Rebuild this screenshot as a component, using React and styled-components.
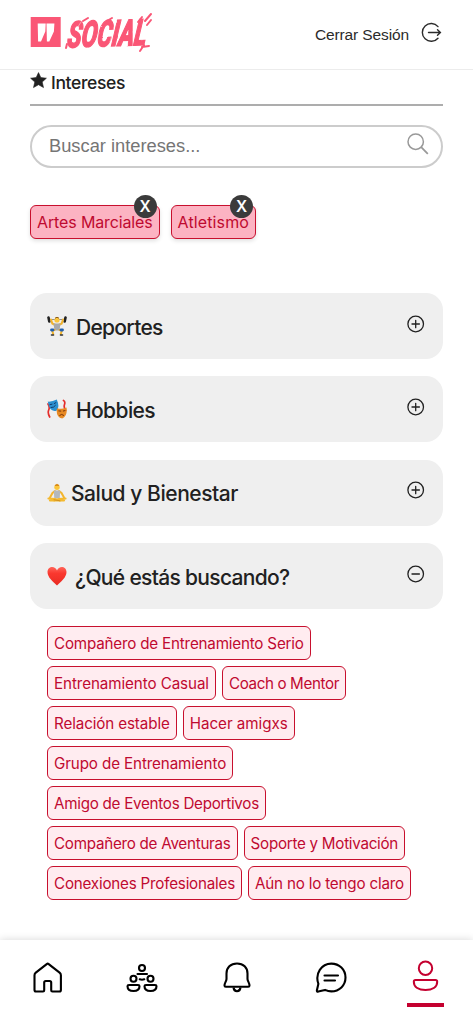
import React, { Component } from 'react';
import styled, { createGlobalStyle, css } from 'styled-components';

const GlobalStyle = createGlobalStyle`
    * {
        box-sizing: border-box;
    }

    body {
        margin: 0;
        background: #fff;
        color: #212121;
        font-family: Inter, 'Open Sans', sans-serif;
    }

    button {
        font: inherit;
        color: inherit;
        border: 0;
        padding: 0;
        background: none;
    }
`;

const Page = styled.div`
    display: flex;
    flex-direction: column;
    height: 1024px;
    overflow: hidden;
`;

const Header = styled.header`
    display: flex;
    justify-content: space-between;
    flex: none;
    height: 70px;
    padding: 10px 31px 0 30px;
    border-bottom: 1px solid #ececec;
`;

const Logout = styled.button`
    display: flex;
    align-items: center;
    gap: 12px;
    height: 50px;
    font-family: 'Liberation Sans', Arial, sans-serif;
    font-size: 15.5px;
    letter-spacing: -0.12px;
    color: #2b2b2b;

    svg {
        margin-top: -5px;
    }
`;

const Main = styled.main`
    flex: 1;
    padding: 0 30px;
`;

const Heading = styled.h2`
    display: flex;
    align-items: center;
    gap: 4px;
    height: 36px;
    margin: 0 0 19px;
    padding-bottom: 9px;
    border-bottom: 2px solid #adadad;
    font-size: 17.5px;
    font-weight: 500;
    letter-spacing: -0.35px;

    svg {
        margin-top: -5px;
    }
`;

const SearchBox = styled.label`
    display: flex;
    align-items: center;
    height: 43px;
    padding: 0 12px 0 17px;
    border: 2px solid #ccc;
    border-radius: 22px;

    svg {
        flex: none;
        margin-top: -5px;
    }
`;

const SearchInput = styled.input`
    flex: 1;
    min-width: 0;
    padding: 0 0 1px;
    border: 0;
    outline: 0;
    font-family: 'Liberation Sans', Arial, sans-serif;
    font-size: 18.3px;

    &::placeholder {
        color: #757575;
    }
`;

const SelectedList = styled.div`
    display: flex;
    gap: 11px;
    margin: 37px 0 54px;
`;

const Chip = styled.span`
    position: relative;
    display: flex;
    align-items: center;
    height: 34px;
    padding: 0 6px;
    border: 1px solid #c8102e;
    border-radius: 6px;
    background: #ffecf0;
    color: #bf0a30;
    font-size: ${({$selected}) => $selected ? 16 : 15.2}px;
    letter-spacing: ${({$tracking}) => $tracking}px;
    white-space: nowrap;

    ${({$selected}) => $selected && css`
        background: #fcb3c2;
        box-shadow: 0 2px 4px rgba(0, 0, 0, 0.12);
    `}
`;

const RemoveButton = styled.button`
    position: absolute;
    top: -11px;
    right: 2px;
    width: 23px;
    height: 23px;
    border-radius: 50%;
    background: #3b3b3b;
    color: #fff;
    font-size: 15.5px;
    font-weight: 600;
    letter-spacing: 0;
    line-height: 23px;
    text-align: center;
`;

const Accordion = styled.div`
    display: flex;
    flex-direction: column;
    gap: 17.4px;
`;

const Panel = styled.button`
    display: flex;
    align-items: center;
    height: 66px;
    padding: 0 18px 0 17px;
    border-radius: 17px;
    background: #efefef;

    > svg:last-child {
        margin: -5px 0 0 auto;
    }
`;

const PanelTitle = styled.span`
    margin: 2px 0 0 ${({$gap}) => $gap}px;
    font-size: 21px;
    font-weight: 500;
    letter-spacing: ${({$tracking}) => $tracking}px;
`;

const Options = styled.div`
    display: flex;
    flex-wrap: wrap;
    gap: 6px;
    padding: 17px 17px 0;
`;

const Footer = styled.nav`
    display: flex;
    justify-content: space-between;
    flex: none;
    height: 84px;
    padding: 19px 29px 0;
    background: #fff;
    box-shadow: 0 0 8px rgba(0, 0, 0, 0.16);
`;

const NavItem = styled.button`
    display: flex;
    justify-content: center;
    width: 37px;
    height: 48px;
    color: ${({$active}) => $active ? '#c4002f' : '#000'};
    border-bottom: 4px solid ${({$active}) => $active ? '#c4002f' : 'transparent'};
`;

const Logo = () => (
    <svg width="136" height="48" viewBox="0 0 136 48">
        <defs>
            <filter id="brush" x="-5%" y="-10%" width="110%" height="120%">
                <feTurbulence type="fractalNoise" baseFrequency="0.2" numOctaves="1" seed="4" />
                <feDisplacementMap in="SourceGraphic" scale="2" xChannelSelector="R" yChannelSelector="G" />
            </filter>
        </defs>
        <rect x="0.7" y="7" width="30" height="30" fill="#fa5776" />
        <path d="M7.700 13.400h8l-.4 8-4.300 10H8.100zM16.500 13.400h7.900l-.5 8-4.600 10h-2.400z" fill="#fff" />
        <g filter="url(#brush)" fill="#fa5776" stroke="#fa5776" strokeLinecap="round">
            <text
                transform="translate(36.500 37.500) rotate(-2) skewX(-9) scale(0.650 1)"
                fontFamily="Roboto, sans-serif"
                fontSize="36"
                fontWeight="800"
                fontStyle="italic"
                strokeWidth="1.500"
            >SOCIAL</text>
            <path d="M53 11l5-3M77 11l5-3M108 12l4-5M115 11l6-7M117 15l4-5M112 37l7-1M110 41l4-6M37 34l-1 4" strokeWidth="2" fill="none" />
            <path d="M46 20l5-8M66 33l3-10M80 32l4-15M103 22l4-9M112 30l4-13" stroke="#fff" strokeWidth="0.4" fill="none" />
        </g>
    </svg>
);

const LogoutIcon = () => (
    <svg width="21" height="21" viewBox="0 0 21 21" fill="none" stroke="#2b2b2b" strokeWidth="1.4" strokeLinecap="round">
        <path d="M17 4.600A8.900 8.900 0 1 0 17 16.200" />
        <path d="M7.500 10.500H19.300M16.500 7.700l2.900 2.800-2.900 2.800" />
    </svg>
);

const StarIcon = () => (
    <svg width="17" height="17" viewBox="0 0 17 17" fill="#212121">
        <path d="M8.500.600l2.300 5 5.600.6-4.200 3.800 1.300 5.600-5-2.900-5 2.900 1.300-5.600L.6 6.200l5.600-.6z" stroke="#212121" strokeWidth=".6" strokeLinejoin="round" />
    </svg>
);

const SearchIcon = () => (
    <svg width="22" height="22" viewBox="0 0 22 22" fill="none" stroke="#999" strokeWidth="1.500">
        <circle cx="8.700" cy="8.700" r="7.700" />
        <path d="M14.200 14.200l6.600 6.600" strokeWidth="1.800" />
    </svg>
);

const ToggleIcon = ({open}) => (
    <svg width="18" height="18" viewBox="0 0 18 18" fill="none" stroke="#212121" strokeWidth="1.300" strokeLinecap="round">
        <circle cx="8.700" cy="9" r="7.800" />
        <path d={open ? 'M5 9h7.400' : 'M5 9h7.400M8.700 5.300v7.400'} />
    </svg>
);

const LifterIcon = () => (
    <svg width="20" height="20" viewBox="0 0 20 20" fill="none" strokeLinecap="round">
        <path d="M2 3.500h16" stroke="#777" strokeWidth="0.8" />
        <path d="M1.500 1.500l.8 4M18.500 1.500l-.8 4" stroke="#222" strokeWidth="2.600" />
        <path d="M4 3.500l1.300 4L8.300 9M16 3.500l-1.300 4L11.700 9" stroke="#f2b32a" strokeWidth="2" />
        <circle cx="10" cy="4" r="2.600" fill="#fbc63c" />
        <path d="M8.300 1.900q1.700-1.500 3.400 0" stroke="#8d5b18" strokeWidth="1" />
        <path d="M6.500 7.500h7l-1 7h-5z" fill="#a9a9a9" />
        <path d="M7.500 14l-2.300.5 1 3.500M12.500 14l2.300.5-1 3.500" stroke="#f2b32a" strokeWidth="2" />
        <path d="M4.500 14h1.500M14 14h1.500" stroke="#215fae" strokeWidth="2.800" />
        <path d="M4.500 19h2M13.500 19h2" stroke="#303030" strokeWidth="1.600" />
    </svg>
);

const MasksIcon = () => (
    <svg width="20" height="20" viewBox="0 0 20 20" fill="none" strokeLinecap="round">
        <path d="M1 5q2 3 .7 6t1 7M16.500 1.500q2 1 1 4t1.200 6" stroke="#e42d2b" strokeWidth="1.700" />
        <path d="M.8 2.600Q5 3 9.800.5q3.500 8-.4 11.300Q2.500 13.500.8 2.600z" fill="#2c91d0" />
        <path d="M3 5.700l2-.5M7.200 4.600l1.700-1M4 8.600q3 .3 4.500-2.200" stroke="#123b6a" strokeWidth="1" />
        <path d="M10 9.200q5 1.500 9.500-.7 1.300 8.500-4.300 11Q8.500 18 10 9.200z" fill="#e88a24" />
        <path d="M11.800 11.900l2 .2M16.300 12l1.700-.4M12.700 16.300q2-2 4 0" stroke="#793508" strokeWidth="1" />
    </svg>
);

const YogaIcon = () => (
    <svg width="20" height="20" viewBox="0 0 20 20" fill="none" strokeLinecap="round">
        <path d="M8 8L5.500 10 3 14.500M12 8l2.500 2 2.500 4.500" stroke="#f3b52d" strokeWidth="2" />
        <path d="M6.800 7.500h6.400L12.700 15.500H7.300z" fill="#b3b8bd" />
        <circle cx="10" cy="4.200" r="2.700" fill="#fbc63c" />
        <path d="M7.700 3q.3-1.500 1.600-1.700Q10 0 10.700 1.300q1.300.2 1.600 1.700z" fill="#d88a18" />
        <path d="M1.500 15.500l6.500.5 5 1.700M18.500 15.500l-6.500.5-5 1.700M3 17.500h14" stroke="#f4b92f" strokeWidth="2.200" />
        <path d="M7 16.800l6 1" stroke="#c98618" strokeWidth="0.8" />
    </svg>
);

const HeartIcon = () => (
    <svg width="20" height="20" viewBox="0 0 20 20">
        <defs>
            <linearGradient id="heart" x1="0" y1="0" x2="0" y2="1">
                <stop offset="0" stopColor="#ff665a" />
                <stop offset="0.35" stopColor="#fa382f" />
                <stop offset="1" stopColor="#e82b22" />
            </linearGradient>
        </defs>
        <path d="M10 19.400C6 15.500.5 11.500.5 6c0-6 7.700-7 9.500-1.400C11.800-1 19.500 0 19.500 6c0 5.500-5.500 9.500-9.500 13.400z" fill="url(#heart)" />
    </svg>
);

const HomeIcon = () => (
    <svg width="32" height="34" viewBox="0 0 32 34" fill="none" stroke="currentColor" strokeWidth="2.100" strokeLinejoin="round">
        <path d="M2.500 16.300q0-1.700 1.300-2.700L14.700 5.100q1-.8 2 0l10.900 8.500q1.300 1 1.300 2.700V31q0 1.500-1.500 1.500H20.400q-1.200 0-1.200-1.200V23.500q0-1.500-1.500-1.500h-4q-1.500 0-1.500 1.500v7.800q0 1.200-1.200 1.200H4Q2.500 32.500 2.500 31z" />
    </svg>
);

const PeopleIcon = () => (
    <svg width="32" height="34" viewBox="0 0 32 34" fill="none" stroke="currentColor" strokeWidth="2.100" strokeLinecap="round" strokeLinejoin="round">
        <circle cx="16" cy="9" r="3" />
        <circle cx="7.500" cy="19.800" r="3" />
        <circle cx="24.500" cy="19.800" r="3" />
        <path d="M11.500 15h9.500M13.700 20.300q2.300.8 4.600 0" />
        <path d="M3 26h9q1.500 0 1.500 1.300 0 4.700-6 4.700t-6-4.700Q1.500 26 3 26zM20 26h9q1.500 0 1.500 1.300 0 4.700-6 4.700t-6-4.700Q18.500 26 20 26z" />
    </svg>
);

const BellIcon = () => (
    <svg width="32" height="34" viewBox="0 0 32 34" fill="none" stroke="currentColor" strokeWidth="2.100" strokeLinejoin="round">
        <path d="M16 4.500C9.500 4.500 5.500 8.800 5.500 14.500V20c0 2-2 4-2 6.500 0 1 .5 1.300 1.300 1.300h22.400c.8 0 1.300-.3 1.300-1.300 0-2.500-2-4.500-2-6.500v-5.500C26.500 8.800 22.500 4.500 16 4.500z" />
        <path d="M12.500 28.500q.5 3.700 3.500 3.700t3.500-3.700" />
    </svg>
);

const ChatIcon = () => (
    <svg width="32" height="34" viewBox="0 0 32 34" fill="none" stroke="currentColor" strokeWidth="2.100" strokeLinecap="round" strokeLinejoin="round">
        <path d="M3.200 32.600q-1.500.3-1.300-1.300l1.500-6.500C-.3 14.500 6.500 4.600 16.300 4.600c8 0 14.200 6 14.200 14s-6.200 13.800-14.200 13.800c-2.300 0-4.300-.6-6.300-1.500z" />
        <path d="M9.500 16.500h13.500M9.500 21.500h10.500" />
    </svg>
);

const ProfileIcon = () => (
    <svg width="32" height="34" viewBox="0 0 32 34" fill="none" stroke="currentColor" strokeWidth="2" strokeLinejoin="round">
        <circle cx="15.500" cy="9.300" r="6.700" />
        <path d="M5.500 21h20q1.700 0 1.700 1.700c0 5.500-5 8.300-11.700 8.300S3.800 28.200 3.800 22.700Q3.800 21 5.500 21z" />
    </svg>
);

const categories = [
    {name: 'Deportes', Icon: LifterIcon, gap: 9, tracking: -0.7},
    {name: 'Hobbies', Icon: MasksIcon, gap: 9, tracking: -0.6},
    {name: 'Salud y Bienestar', Icon: YogaIcon, gap: 4, tracking: -0.45},
    {name: '¿Qué estás buscando?', Icon: HeartIcon, gap: 8, tracking: -0.68},
];

const selectable = [
    {name: 'Artes Marciales', tracking: -0.13},
    {name: 'Atletismo', tracking: 0.13},
];

const options = [
    {name: 'Compañero de Entrenamiento Serio', tracking: -0.19},
    {name: 'Entrenamiento Casual', tracking: -0.09},
    {name: 'Coach o Mentor', tracking: -0.38},
    {name: 'Relación estable', tracking: -0.12},
    {name: 'Hacer amigxs', tracking: -0.03},
    {name: 'Grupo de Entrenamiento', tracking: -0.12},
    {name: 'Amigo de Eventos Deportivos', tracking: -0.27},
    {name: 'Compañero de Aventuras', tracking: -0.26},
    {name: 'Soporte y Motivación', tracking: -0.27},
    {name: 'Conexiones Profesionales', tracking: -0.21},
    {name: 'Aún no lo tengo claro', tracking: -0.19},
];

const navItems = [
    {label: 'Inicio', Icon: HomeIcon},
    {label: 'Comunidad', Icon: PeopleIcon},
    {label: 'Notificaciones', Icon: BellIcon},
    {label: 'Mensajes', Icon: ChatIcon},
    {label: 'Perfil', Icon: ProfileIcon},
];

class App extends Component {

    state = {
        selected: selectable,
        openIndex: 3,
        activeTab: 4,
    };

    onRemove = (name) => {
        const {selected} = this.state;

        this.setState({selected: selected.filter((item) => item.name !== name)});
    };

    onToggle = (index) => {
        const {openIndex} = this.state;

        this.setState({openIndex: openIndex === index ? -1 : index});
    };

    render() {
        const {selected, openIndex, activeTab} = this.state;
        const {onRemove, onToggle} = this;

        return (
            <Page>
                <GlobalStyle />
                <Header>
                    <Logo />
                    <Logout>Cerrar Sesión <LogoutIcon /></Logout>
                </Header>
                <Main>
                    <Heading><StarIcon /> Intereses</Heading>
                    <SearchBox>
                        <SearchInput placeholder="Buscar intereses..." />
                        <SearchIcon />
                    </SearchBox>
                    <SelectedList>
                        {selected.map(({name, tracking}) => (
                            <Chip key={name} $selected $tracking={tracking}>
                                {name}
                                <RemoveButton onClick={() => {onRemove(name)}}>X</RemoveButton>
                            </Chip>
                        ))}
                    </SelectedList>
                    <Accordion>
                        {categories.map(({name, Icon, gap, tracking}, index) => (
                            <Panel key={name} onClick={() => {onToggle(index)}}>
                                <Icon />
                                <PanelTitle $gap={gap} $tracking={tracking}>{name}</PanelTitle>
                                <ToggleIcon open={openIndex === index} />
                            </Panel>
                        ))}
                    </Accordion>
                    {openIndex === 3 && (
                        <Options>
                            {options.map(({name, tracking}) => (
                                <Chip key={name} $tracking={tracking}>{name}</Chip>
                            ))}
                        </Options>
                    )}
                </Main>
                <Footer>
                    {navItems.map(({label, Icon}, index) => (
                        <NavItem
                            key={label}
                            aria-label={label}
                            $active={index === activeTab}
                            onClick={() => {this.setState({activeTab: index})}}
                        >
                            <Icon />
                        </NavItem>
                    ))}
                </Footer>
            </Page>
        );
    }
}

export default App;
